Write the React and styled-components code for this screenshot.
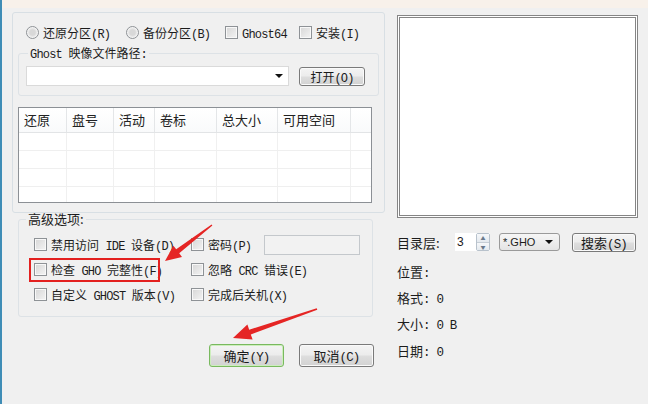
import styled, { createGlobalStyle } from "styled-components";

const Global = createGlobalStyle`
  html, body { margin: 0; padding: 0; background: #f0f0f0; }
  body {
    font-family: "Noto Sans CJK SC", "Liberation Sans", sans-serif;
    font-size: 12px;
    color: #1c1c1c;
  }
`;

// ASCII runs get the narrow monospace look of the old dialog font
const T = ({ children, size }) => (
  <Text>
    {String(children)
      .split(/([\x20-\x7e]+)/)
      .filter(Boolean)
      .map((part, i) =>
        /^[\x20-\x7e]+$/.test(part)
          ? <Lat key={i} $size={size}>{part}</Lat>
          : <span key={i}>{part}</span>
      )}
  </Text>
);

export default function App() {
  const columns = ["还原", "盘号", "活动", "卷标", "总大小", "可用空间", ""];

  return (
    <>
      <Global />
      <Window>
        <TopStrip />
        <Body>
          <LeftCol>
            <OuterGroup>
              <RadioRow>
                <Option $w={100}><Radio /><T>还原分区(R)</T></Option>
                <Option $w={99}><Radio /><T>备份分区(B)</T></Option>
                <Option $w={74}><CheckBox /><T>Ghost64</T></Option>
                <Option><CheckBox /><T>安装(I)</T></Option>
              </RadioRow>
              <PathGroup>
                <Legend><T>Ghost 映像文件路径:</T></Legend>
                <PathRow>
                  <PathCombo><Caret /></PathCombo>
                  <Button $w={66} $h={19}><T>打开(O)</T></Button>
                </PathRow>
              </PathGroup>
              <Table>
                <HeadRow>
                  {columns.map((c, i) => <HeadCell key={i}>{c}</HeadCell>)}
                </HeadRow>
                {[0, 1, 2, 3].map(r => (
                  <BodyRow key={r} $last={r === 3}>
                    {columns.map((c, i) => <BodyCell key={i} />)}
                  </BodyRow>
                ))}
              </Table>
            </OuterGroup>

            <AdvGroup>
              <AdvLegend>高级选项:</AdvLegend>
              <AdvGrid>
                <Option><CheckBox /><T>禁用访问 IDE 设备(D)</T></Option>
                <Option><CheckBox /><T>密码(P)</T></Option>
                <Password />
                <Option><CheckBox /><T>检查 GHO 完整性(F)</T></Option>
                <Option $span><CheckBox /><T>忽略 CRC 错误(E)</T></Option>
                <Option><CheckBox /><T>自定义 GHOST 版本(V)</T></Option>
                <Option $span><CheckBox /><T>完成后关机(X)</T></Option>
              </AdvGrid>
            </AdvGroup>

            <DialogButtons>
              <Button $w={75} $h={23} $default><T size={12.5}>确定(Y)</T></Button>
              <Button $w={75} $h={23}><T size={12.5}>取消(C)</T></Button>
            </DialogButtons>
          </LeftCol>

          <RightCol>
            <ListBox />
            <Controls>
              <CtrlLabel>目录层:</CtrlLabel>
              <Spin>
                <SpinValue>3</SpinValue>
                <SpinButtons>
                  <SpinBtn>▲</SpinBtn>
                  <SpinBtn>▼</SpinBtn>
                </SpinButtons>
              </Spin>
              <TypeCombo>*.GHO<Caret /></TypeCombo>
              <Button $w={64} $h={19} $text={13}><T size={12.5}>搜索(S)</T></Button>
            </Controls>
            <Info>
              <InfoLine><T size={12.5}>位置:</T></InfoLine>
              <InfoLine><T size={12.5}>格式: 0</T></InfoLine>
              <InfoLine><T size={12.5}>大小: 0 B</T></InfoLine>
              <InfoLine><T size={12.5}>日期: 0</T></InfoLine>
            </Info>
          </RightCol>
        </Body>

        <Highlight />
        <Arrows viewBox="0 0 648 404" width="648" height="404">
          <polygon
            fill="#e52524"
            points="212.4,225.6 179.2,253.3 182,256.9 165,261 173.4,245.7 176.2,249.3 211.6,224.4"
          />
          <polygon
            fill="#e52524"
            points="317.3,309.8 250.8,334.5 252.6,339.6 233,338 247.4,324.5 249.2,329.7 316.7,308.2"
          />
        </Arrows>
      </Window>
    </>
  );
}

const Text = styled.span`
  white-space: pre;
`;

const Lat = styled.span`
  font-family: "Liberation Mono", monospace;
  font-size: ${p => p.$size || 12}px;
  letter-spacing: -0.8px;
  line-height: 1;
`;

const Window = styled.div`
  position: relative;
  width: 646px;
  height: 404px;
  background: #f0f0f0;
  border-left: 2px solid #3f8db6;
  overflow: hidden;
`;

const TopStrip = styled.div`
  height: 8px;
  background: #f8f1ea;
`;

const Body = styled.div`
  display: flex;
  padding-left: 10px;
  gap: 12px;
`;

const LeftCol = styled.div`
  width: 373px;
  display: flex;
  flex-direction: column;
`;

const OuterGroup = styled.div`
  margin-top: 4px;
  border: 1px solid #d8dfe4;
  border-radius: 3px;
  padding: 0 5px 9px;
`;

const RadioRow = styled.div`
  display: flex;
  align-items: center;
  height: 16px;
  margin-top: 11px;
  padding-left: 8px;
`;

const Option = styled.label`
  display: flex;
  align-items: center;
  gap: 4px;
  white-space: nowrap;
  width: ${p => (p.$w ? `${p.$w}px` : "auto")};
  grid-column: ${p => (p.$span ? "2 / 4" : "auto")};
`;

const Radio = styled.span`
  width: 11px;
  height: 11px;
  border: 1px solid #8e9296;
  border-radius: 50%;
  background: radial-gradient(circle, #d8d8d8 35%, #f7f7f7 70%);
  flex: none;
`;

const CheckBox = styled.span`
  width: 11px;
  height: 11px;
  border: 1px solid #8e9296;
  background: linear-gradient(135deg, #d6d6d6, #f4f4f4);
  box-shadow: inset 0 0 0 1px #f8f8f8;
  flex: none;
`;

const PathGroup = styled.fieldset`
  margin: 6px 0 0;
  padding: 5px 7px 9px;
  border: 1px solid #dde2e6;
  border-radius: 3px;
`;

const Legend = styled.legend`
  padding: 0 2px;
  margin-left: 2px;
  line-height: 14px;
`;

const PathRow = styled.div`
  display: flex;
  align-items: center;
  gap: 10px;
`;

const PathCombo = styled.div`
  width: 263px;
  height: 20px;
  box-sizing: border-box;
  background: #fff;
  border: 1px solid #dadada;
  display: flex;
  align-items: center;
  justify-content: flex-end;
  padding-right: 5px;
`;

const Caret = styled.span`
  width: 0;
  height: 0;
  border-left: 4px solid transparent;
  border-right: 4px solid transparent;
  border-top: 4px solid #111;
`;

const Button = styled.div`
  width: ${p => p.$w}px;
  height: ${p => p.$h}px;
  box-sizing: border-box;
  display: flex;
  align-items: center;
  justify-content: center;
  border: 1px solid ${p => (p.$default ? "#79b95f" : "#7a7a7a")};
  border-radius: 3px;
  background: linear-gradient(#f4f4f4 0%, #ececec 48%, #dedede 52%, #d2d2d2 100%);
  box-shadow: inset 0 0 0 1px ${p => (p.$default ? "#cdeebd" : "#fafafa")};
  font-size: ${p => (p.$text ? p.$text : p.$h > 20 ? 13 : 12)}px;
  color: #1a1a1a;
  white-space: nowrap;
`;

const Table = styled.div`
  margin-top: 11px;
  width: 354px;
  height: 96px;
  box-sizing: border-box;
  border: 1px solid #8c9095;
  background: #fff;
  overflow: hidden;
`;

const gridCols = "48px 47px 41px 62px 61px 73px 1fr";

const HeadRow = styled.div`
  display: grid;
  grid-template-columns: ${gridCols};
  height: 24px;
  border-bottom: 1px solid #e2e4e6;
  background: linear-gradient(#ffffff, #f9fafb);
`;

const HeadCell = styled.div`
  border-right: 1px solid #e4e6e8;
  padding-left: 5px;
  font-size: 13px;
  line-height: 24px;
  color: #222;
  &:last-child { border-right: none; }
`;

const BodyRow = styled.div`
  display: grid;
  grid-template-columns: ${gridCols};
  height: 17px;
  border-bottom: 1px solid ${p => (p.$last ? "transparent" : "#efefef")};
`;

const BodyCell = styled.div`
  border-right: 1px solid #f0f0f0;
  &:last-child { border-right: none; }
`;

const AdvGroup = styled.fieldset`
  margin: 0 0 0 6px;
  width: 355px;
  box-sizing: border-box;
  padding: 7px 0 9px 15px;
  border: 1px solid #dde2e6;
  border-radius: 3px;
`;

const AdvLegend = styled.legend`
  padding: 0 2px;
  margin-left: -8px;
  line-height: 12px;
  font-size: 13px;
`;

const AdvGrid = styled.div`
  display: grid;
  grid-template-columns: 157px 73px 96px;
  grid-auto-rows: 25px;
  align-items: center;
`;

const Password = styled.div`
  width: 96px;
  height: 20px;
  box-sizing: border-box;
  border: 1px solid #c4c8cc;
  background: #f2f2f2;
`;

const DialogButtons = styled.div`
  display: flex;
  justify-content: flex-end;
  gap: 15px;
  margin-top: 27px;
  padding-right: 11px;
`;

const RightCol = styled.div`
  width: 241px;
  display: flex;
  flex-direction: column;
`;

const ListBox = styled.div`
  margin-top: 7px;
  height: 203px;
  box-sizing: border-box;
  border: 3px double #858585;
  background: #fff;
`;

const Controls = styled.div`
  display: flex;
  align-items: center;
  height: 18px;
  margin-top: 15px;
`;

const CtrlLabel = styled.div`
  width: 58px;
  font-size: 13px;
`;

const Spin = styled.div`
  display: flex;
  width: 35px;
  height: 18px;
  margin-right: 9px;
  background: #fff;
`;

const SpinValue = styled.div`
  width: 20px;
  padding-left: 2px;
  line-height: 18px;
  font-family: "Liberation Sans", sans-serif;
  font-size: 12px;
`;

const SpinButtons = styled.div`
  display: flex;
  flex-direction: column;
  width: 15px;
  border: 1px solid #b8c2cc;
  border-radius: 2px;
  box-sizing: border-box;
`;

const SpinBtn = styled.div`
  flex: 1;
  display: flex;
  align-items: center;
  justify-content: center;
  font-size: 5px;
  color: #6a7a8c;
  background: linear-gradient(#f6f8fa, #e4e9ee);
  & + & { border-top: 1px solid #c6ced6; }
`;

const TypeCombo = styled.div`
  width: 61px;
  height: 18px;
  box-sizing: border-box;
  margin-right: 12px;
  border: 1px solid #9a9a9a;
  border-radius: 3px;
  background: linear-gradient(#f6f6f6, #e4e4e4);
  display: flex;
  align-items: center;
  justify-content: space-between;
  padding: 0 6px 0 3px;
  font-family: "Liberation Sans", sans-serif;
  font-size: 11px;
`;

const Info = styled.div`
  margin-top: 7px;
  display: flex;
  flex-direction: column;
  font-size: 13px;
`;

const InfoLine = styled.div`
  height: 26.3px;
  display: flex;
  align-items: center;
`;

const Highlight = styled.div`
  position: absolute;
  left: 27px;
  top: 258px;
  width: 131px;
  height: 24px;
  box-sizing: border-box;
  border: 2px solid #e3201f;
`;

const Arrows = styled.svg`
  position: absolute;
  left: -2px;
  top: 0;
  pointer-events: none;
`;
